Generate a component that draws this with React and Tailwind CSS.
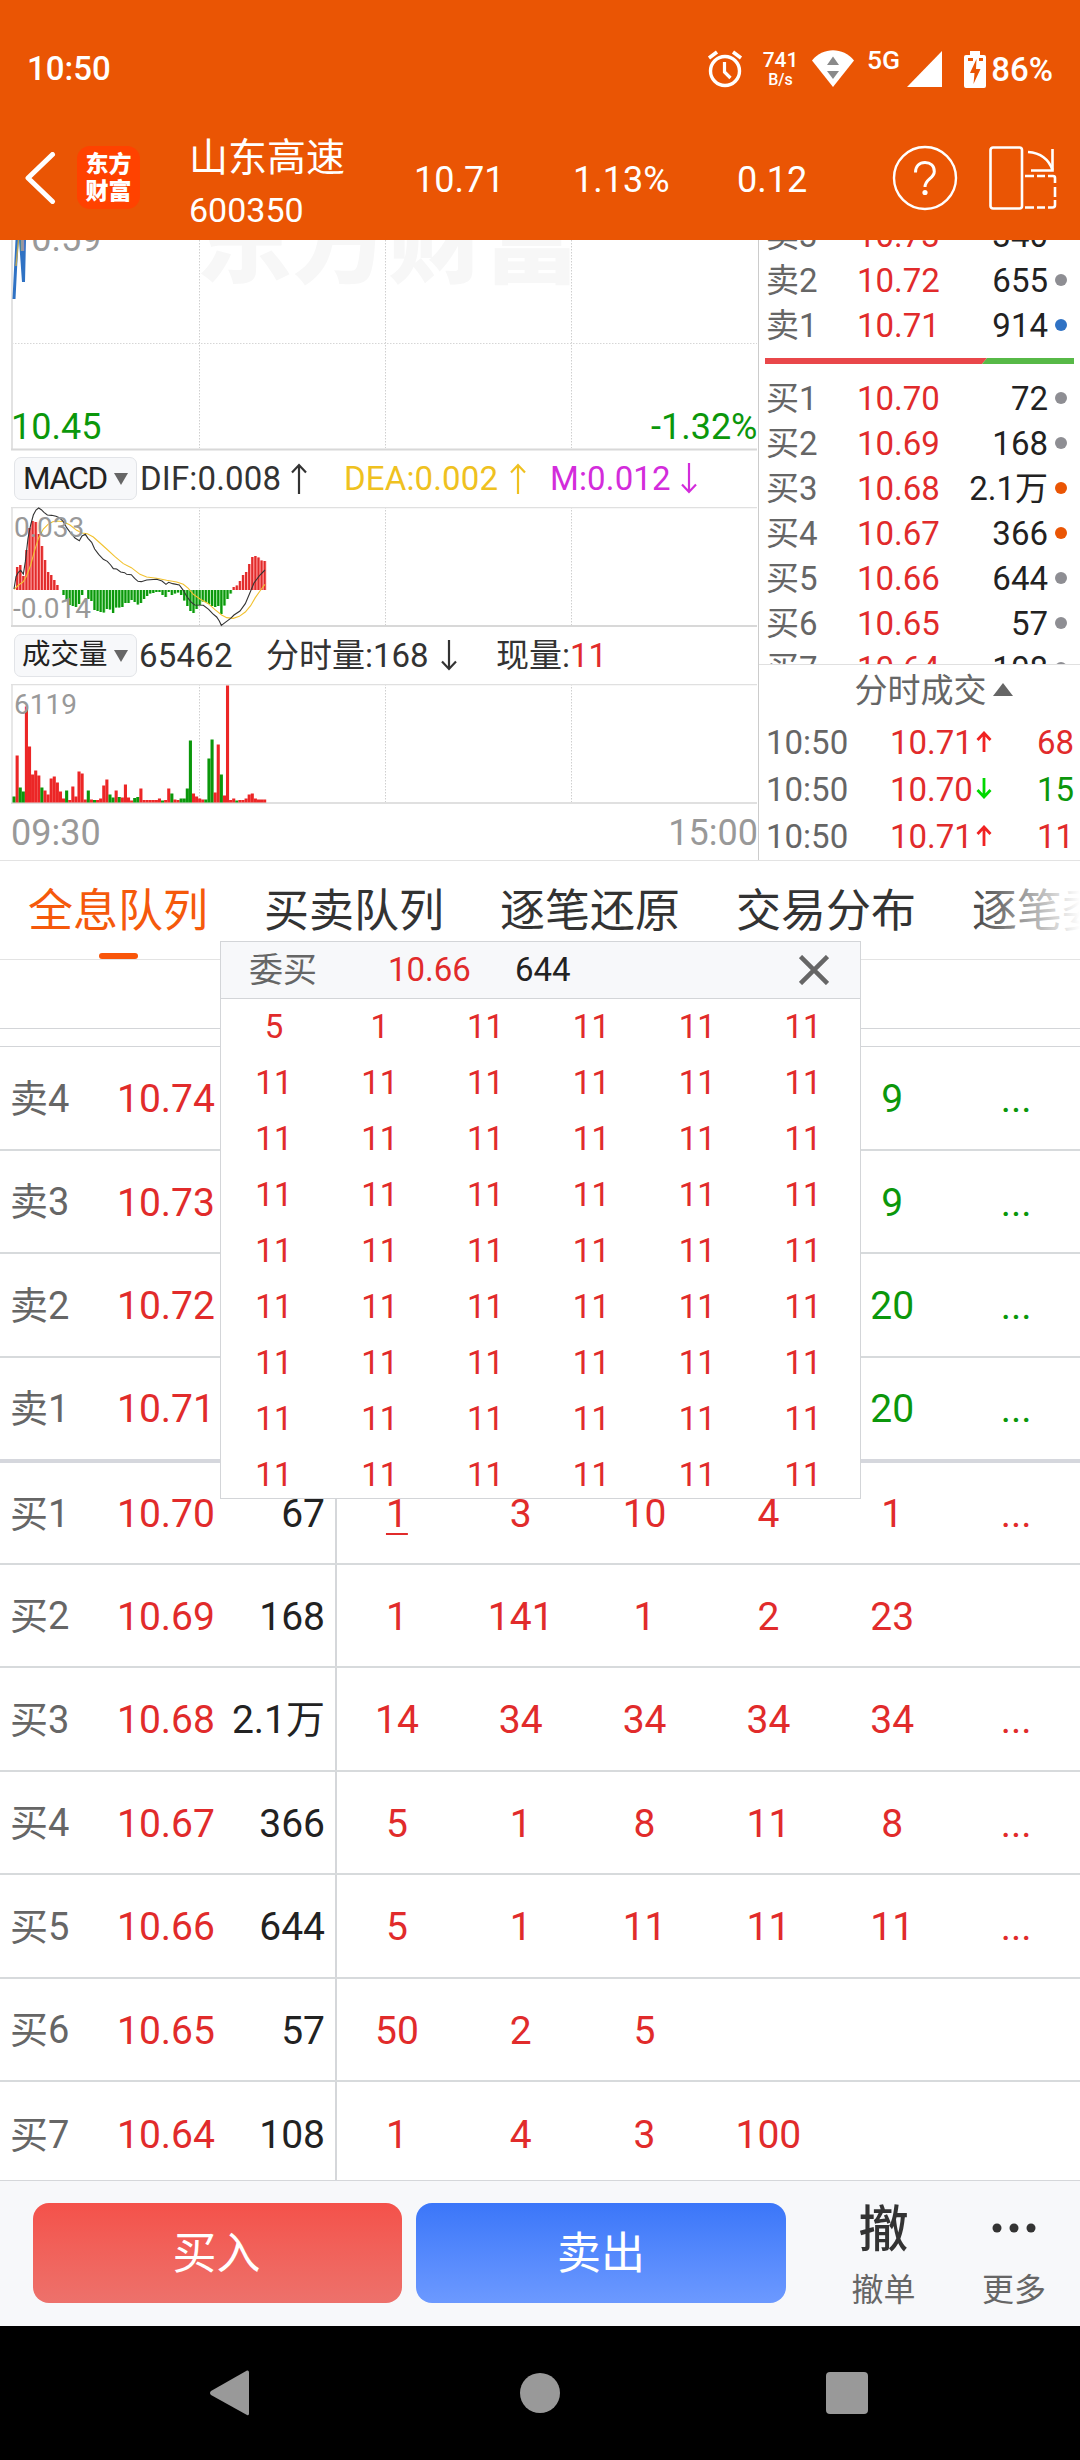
import { useState } from "react";

const RED = "#e12b2b";
const GREEN = "#0b970b";

const asks = [
  { label: "卖3", price: "10.73", qty: "340", dot: "bg-transparent" },
  { label: "卖2", price: "10.72", qty: "655", dot: "bg-[#8e8e93]" },
  { label: "卖1", price: "10.71", qty: "914", dot: "bg-[#2f72c4]" },
];

const bids = [
  { label: "买1", price: "10.70", qty: "72", dot: "bg-[#8e8e93]" },
  { label: "买2", price: "10.69", qty: "168", dot: "bg-[#8e8e93]" },
  { label: "买3", price: "10.68", qty: "2.1万", dot: "bg-[#ea5504]" },
  { label: "买4", price: "10.67", qty: "366", dot: "bg-[#ea5504]" },
  { label: "买5", price: "10.66", qty: "644", dot: "bg-[#8e8e93]" },
  { label: "买6", price: "10.65", qty: "57", dot: "bg-[#8e8e93]" },
  { label: "买7", price: "10.64", qty: "108", dot: "bg-[#8e8e93]" },
];

const trades = [
  { time: "10:50", price: "10.71", up: true, qty: "68" },
  { time: "10:50", price: "10.70", up: false, qty: "15" },
  { time: "10:50", price: "10.71", up: true, qty: "11" },
];

const tabs = ["全息队列", "买卖队列", "逐笔还原", "交易分布", "逐笔委托"];

const queue = [
  { label: "卖4", price: "10.74", qty: "", sell: true, cells: ["", "", "", "", "9", "..."] },
  { label: "卖3", price: "10.73", qty: "", sell: true, cells: ["", "", "", "", "9", "..."] },
  { label: "卖2", price: "10.72", qty: "", sell: true, cells: ["", "", "", "", "20", "..."] },
  { label: "卖1", price: "10.71", qty: "", sell: true, cells: ["", "", "", "", "20", "..."] },
  { label: "买1", price: "10.70", qty: "67", cells: ["1", "3", "10", "4", "1", "..."] },
  { label: "买2", price: "10.69", qty: "168", cells: ["1", "141", "1", "2", "23", ""] },
  { label: "买3", price: "10.68", qty: "2.1万", cells: ["14", "34", "34", "34", "34", "..."] },
  { label: "买4", price: "10.67", qty: "366", cells: ["5", "1", "8", "11", "8", "..."] },
  { label: "买5", price: "10.66", qty: "644", cells: ["5", "1", "11", "11", "11", "..."] },
  { label: "买6", price: "10.65", qty: "57", cells: ["50", "2", "5", "", "", ""] },
  { label: "买7", price: "10.64", qty: "108", cells: ["1", "4", "3", "100", "", ""] },
];

// heights of the rows around the sell / buy divider differ from the rest
const rowStyle = {
  卖1: "h-[105px] border-b-4 border-[#d5d7dd]",
  买1: "h-[102px] border-b-2 border-[#d7dadc]",
  买7: "h-[104px]",
};

const orders = ["5", "1", ...Array(52).fill("11")];

// one value per minute
const macd = [
  0, 23, 25, 14, 40, 62, 69, 68, 56, 44, 30, 18, 15, 10, 5, 0, -5, -11, -15, -16, -17, -14, -5, 0,
  -9, -11, -20, -21, -22, -22.5, -19, -19.5, -23, -17.5, -17.5, -17, -13, -13, -10, -12, -14.5, -13,
  -9, -6, -3.5, -3, -2, -2, -5, -7, -2, -5, -3.5, -2.5, -5, -10.5, -16, -21, -23, -19, -15, -11.5,
  -12, -14, -16, -17, -16, -24, -15.5, -9, -3.5, 3, 4.5, 9, 15, 18, 26, 33, 34, 32.5, 29.5, 29,
];

// negative = down minute
const volume = [
  -6, 47, -15, -11, 96, 56, 28, 32, 27, -15, 12, 8, 24, 26, 20, 11, 4, -12, 2.5, 16, 6, 31, 29, 3,
  -12, 3, -2.5, 2.5, 4, 17, 23, -8, -5, 12, -5.5, 5, 18, 5, 2, -4.5, -5.5, 14, 2.5, 2.5, 2.5, 2.5,
  2.5, 4, -2, 2.5, 14, -9, 3, 2.5, -4, -4, -14, -62, 9, 6, 4, 3, -3, -44, -63, 10, 58, -28, 7, 117,
  2.5, 4, -2, 2.5, 2.5, 4, 8, 9, 4, 3, 3, 3,
];

const DIF =
  "42,252 48,215 55,202 62,196 70,207 76,170 84,100 92,60 100,30 108,15 116,9 124,14 132,22 142,30 155,31 168,34 178,38 190,50 200,68 212,84 225,99 238,107 246,93 256,88 264,100 275,112 284,132 296,148 310,163 322,169 332,180 340,191 350,192 362,201 374,203 380,208 394,209 404,220 414,229 424,230 440,225 470,223 486,228 498,238 506,232 518,236 538,240 550,256 560,274 572,290 584,300 610,301 626,313 638,326 650,336 658,348 664,361 676,352 692,340 702,330 720,318 736,296 748,268 762,234 780,210 795,195";
const DEA =
  "42,253 56,240 70,230 80,212 92,180 104,136 116,98 130,72 144,58 158,50 172,48 190,50 210,60 230,76 246,84 262,86 280,96 300,114 320,132 344,154 370,176 394,188 420,208 440,216 470,220 500,226 530,231 550,238 565,250 580,268 600,282 625,296 645,314 665,330 680,338 700,340 718,334 736,321 752,302 766,278 780,258 795,238";

const GridLines = ({ height }) => (
  <g stroke="#cfcfcf" strokeWidth="1" strokeDasharray="1.5 1.5">
    <path d={`M199.5 0V${height}`} />
    <path d={`M385.5 0V${height}`} />
    <path d={`M571.5 0V${height}`} />
  </g>
);

const Arrow = ({ down, className }) => (
  <svg
    viewBox="0 0 16 31"
    className={className}
    fill="none"
    stroke="currentColor"
    strokeWidth="2.2"
  >
    {down ? <path d="M8 0V29M1 21.500L8 29L15 21.500" /> : <path d="M8 31V2M1 9.500L8 2L15 9.500" />}
  </svg>
);

const StatusBar = () => (
  <div className="flex h-[113px] items-end pr-[27px] pl-[27px] text-white">
    <div className="flex h-[88px] w-full items-center text-[33px] font-medium">
      <span>10:50</span>
      <div className="ml-auto flex h-[38px] items-start">
        <svg width="36" height="38" viewBox="0 0 36 38" fill="none" stroke="white">
          <circle cx="18" cy="21" r="14.500" strokeWidth="3.400" />
          <path d="M17.500 12v10l6 6" strokeWidth="3.200" />
          <path d="M2 8L10 2M34 8L26 2" strokeWidth="3.600" />
        </svg>
        <div className="ml-[19px] flex w-[37px] flex-col items-center">
          <span className="text-[21px] leading-[20px]">741</span>
          <span className="text-[16px] leading-[20px]">B/s</span>
        </div>
        <svg className="ml-[13px]" width="42" height="37" viewBox="0 0 42 37">
          <path d="M0 10.500C11-3.200 31-3.200 42 10.500L21 37Z" fill="white" />
          <path d="M21 6.500L27 15H15ZM21 29L15 21H27Z" fill="#8a8a8a" />
        </svg>
        <span className="ml-[13px] text-[26.5px] leading-[20px] font-medium">5G</span>
        <svg className="mt-[1px] ml-[7px]" width="35" height="36" viewBox="0 0 35 36">
          <path d="M35 0V36H0Z" fill="white" />
        </svg>
        <svg className="mt-[1px] ml-[22px]" width="22" height="37" viewBox="0 0 22 37">
          <path d="M6 0h10v4h4a2 2 0 0 1 2 2v29a2 2 0 0 1-2 2H2a2 2 0 0 1-2-2V6a2 2 0 0 1 2-2h4Z" fill="white" />
          <path d="M12.500 8L6 22h4.500L9.500 33L16.500 18H12ZM4 7h5v3H4ZM15 7h4v3h-4Z" fill="#ea5504" />
        </svg>
        <span className="ml-[5px] leading-[40px]">86%</span>
      </div>
    </div>
  </div>
);

const Header = () => (
  <div className="flex h-[127px] items-start text-white">
    <svg className="mt-[39px] ml-[24px]" width="32" height="52" viewBox="0 0 32 52" fill="none" stroke="white" strokeWidth="5">
      <path d="M28.500 2.500L4 26L28.500 49.500" strokeLinecap="round" strokeLinejoin="round" />
    </svg>
    <div className="mt-[33px] ml-[21px] flex h-[63px] w-[63px] flex-col items-center justify-center rounded-[13px] bg-[#ff4200] text-[23px] leading-[27px] font-black">
      <span>东方</span>
      <span>财富</span>
    </div>
    <div className="mt-[20px] ml-[49px] flex w-[225px] flex-col">
      <span className="text-[39px] leading-[50px]">山东高速</span>
      <span className="text-[34px] leading-[55px]">600350</span>
    </div>
    <div className="flex h-[134px] items-center text-[36px]">
      <span className="w-[159px]">10.71</span>
      <span className="w-[164px]">1.13%</span>
      <span className="w-[155px]">0.12</span>
    </div>
    <svg className="mt-[32px]" width="66" height="66" viewBox="0 0 66 66" fill="none" stroke="white">
      <circle cx="33" cy="33" r="31" strokeWidth="2.400" />
      <path d="M23.500 27.500C23.500 21 27.500 17.500 33 17.500S42.300 21 42.300 26.500C42.300 33.500 33 34 33 42" strokeWidth="3" />
      <circle cx="33" cy="47.500" r="2.600" fill="white" stroke="none" />
    </svg>
    <svg className="mt-[32px] ml-[30px]" width="70" height="66" viewBox="0 0 70 66" fill="none" stroke="white" strokeWidth="2.600">
      <rect x="2.500" y="2.500" width="31.500" height="61" rx="2.500" />
      <path d="M40 7C53 8 61 15 64.500 25" />
      <path d="M64.500 4V25.500H43" />
      <path d="M37 31H46M49 31H57M60 31H65Q67 31 67 33V38M67 42V52M67 55V60Q67 62.500 64.500 62.500H60M57 62.500H49M46 62.500H37" />
    </svg>
  </div>
);

const Chip = ({ children }) => (
  <div className="ml-[14px] flex h-[43px] w-[123px] shrink-0 items-center justify-between rounded-[7px] border border-[#e2e4e8] bg-[#f7f8fa] pr-[8px] pl-[8px] text-[#222]">
    {children}
    <svg width="14" height="12" viewBox="0 0 14 12">
      <path d="M0 0H14L7 12Z" fill="#666" />
    </svg>
  </div>
);

const Charts = () => (
  <div className="flex w-[758px] flex-col">
    <svg width="758" height="211" viewBox="0 0 758 211" className="block">
      <text x="196" y="35" fontSize="96" fontWeight="900" fill="#f7f7f7">东方财富</text>
      <GridLines height={208} />
      <path d="M12 103.500H757" stroke="#d6d6d6" strokeDasharray="1.5 1.5" />
      <path d="M12 0V210" stroke="#e2e2e2" strokeWidth="2" />
      <path d="M11 209.500H757" stroke="#d8d8d8" strokeWidth="2" />
      <path d="M14 59L17 0M20.500 0L23.500 42L24.500 0" stroke="#2f72c4" strokeWidth="3" fill="none" />
      <path d="M16 26L18.500 0" stroke="#b9a55a" strokeWidth="1.500" />
      <text x="11" y="11" fontSize="36" fill="#999">10.59</text>
      <text x="11" y="199" fontSize="36" fill={GREEN}>10.45</text>
      <text x="757.5" y="199" fontSize="36" fill={GREEN} textAnchor="end">-1.32%</text>
    </svg>

    <div className="flex h-[56px] items-center pb-[1px] text-[33px] text-[#333]">
      <Chip>
        <span className="text-[31.5px] tracking-[-1.4px]">MACD</span>
      </Chip>
      <span className="ml-[3px] w-[151px] tracking-[0.15px] whitespace-nowrap">DIF:0.008</span>
      <Arrow className="h-[31px] w-[16px]" />
      <div className="flex items-center text-[#efc120]">
        <span className="ml-[37px] w-[166px] tracking-[0.15px] whitespace-nowrap">DEA:0.002</span>
        <Arrow className="h-[31px] w-[16px]" />
      </div>
      <div className="flex items-center text-[#d32cdb]">
        <span className="ml-[24px] w-[131px] tracking-[0.15px] whitespace-nowrap">M:0.012</span>
        <Arrow down className="h-[31px] w-[16px]" />
      </div>
    </div>

    <svg width="758" height="120" viewBox="0 0 758 120" className="block">
      <GridLines height={118} />
      <path d="M12 0V119M11 0.500H757" stroke="#e0e0e0" strokeWidth="1.500" />
      <path d="M11 119H757" stroke="#d8d8d8" strokeWidth="2" />
      {macd.map((v, i) => (
        <g key={i}>
          <rect x={12.800 + i * 3.094} y={v > 0 ? 83 - v : 83} width="2.900" height={Math.abs(v)} fill={v > 0 ? "#ff9a9a" : "#8fe08f"} />
          <rect x={13 + i * 3.094} y={v > 0 ? 83 - v : 83} width="2" height={Math.abs(v)} fill={v > 0 ? RED : GREEN} />
        </g>
      ))}
      <g transform="scale(0.3333) translate(0 -6)" fill="none" strokeWidth="3.300">
        <polyline points={DEA} stroke="#f2c230" />
        <polyline points={DIF} stroke="#333" />
      </g>
      <text x="14" y="30" fontSize="28" fill="#999">0.033</text>
      <text x="13" y="111" fontSize="28" fill="#999">-0.014</text>
    </svg>

    <div className="flex h-[57px] items-center text-[33px] text-[#333]">
      <Chip>
        <span className="-ml-[1px] text-[28.5px]">成交量</span>
      </Chip>
      <span className="ml-[2px] w-[127px] tracking-[0.2px]">65462</span>
      <span className="w-[175px] whitespace-nowrap">分时量:168</span>
      <Arrow down className="h-[31px] w-[16px]" />
      <span className="ml-[39px] whitespace-nowrap">
        现量:<span className="text-[#e12b2b]">11</span>
      </span>
    </div>

    <svg width="758" height="120" viewBox="0 0 758 120" className="block">
      <GridLines height={118} />
      <path d="M12 0V119M11 0.500H757" stroke="#e0e0e0" strokeWidth="1.500" />
      <path d="M11 119H757" stroke="#e0e0e0" strokeWidth="2" />
      {volume.map((v, i) => (
        <rect key={i} x={12.500 + i * 3.094} y={118.500 - Math.abs(v)} width="3.100" height={Math.abs(v)} fill={v > 0 ? "#ec2626" : GREEN} />
      ))}
      <text x="14" y="30" fontSize="28" fill="#999">6119</text>
    </svg>

    <div className="flex h-[56px] items-center justify-between pt-[2px] pl-[11px] text-[36px] text-[#999]">
      <span>09:30</span>
      <span>15:00</span>
    </div>
  </div>
);

const BookRow = ({ row }) => (
  <div className="flex h-[45px] shrink-0 items-center pr-[13px] text-[33px] leading-[45px]">
    <span className="w-[91px] text-[#666]">{row.label}</span>
    <span className="text-[#e12b2b]">{row.price}</span>
    <span className="ml-auto text-[#222]">{row.qty}</span>
    <span className={`mb-[2px] ml-[7px] h-[12px] w-[12px] rounded-full ${row.dot}`} />
  </div>
);

const OrderBook = () => (
  <div className="flex w-[322px] flex-col border-l border-[#ccc]">
    <div className="flex h-[426px] flex-col overflow-hidden border-b border-[#e0e0e0] pl-[7px]">
      <div className="-mt-[27px] flex flex-col">
        {asks.map((row) => (
          <BookRow key={row.label} row={row} />
        ))}
      </div>
      <svg className="mt-[10px] mb-[12px] -ml-[1px] shrink-0" width="309" height="6" viewBox="0 0 309 6">
        <path d="M0 0H222L217 6H0Z" fill="#e9474a" />
        <path d="M222 0H309V6H217Z" fill="#57b947" />
      </svg>
      {bids.map((row) => (
        <BookRow key={row.label} row={row} />
      ))}
    </div>
    <div className="flex h-[54px] items-center justify-center pb-[2px] pl-[28px] text-[33px] text-[#666]">
      分时成交
      <svg className="mb-[3px] ml-[6px]" width="20" height="13" viewBox="0 0 20 13">
        <path d="M10 0L20 13H0Z" fill="#666" />
      </svg>
    </div>
    {trades.map((t, i) => (
      <div key={i} className="flex h-[47px] items-center pr-[6px] pl-[7px] text-[33px]">
        <span className="w-[124px] text-[#666]">{t.time}</span>
        <span className="w-[86px] text-[#e12b2b]">{t.price}</span>
        <svg
          className={t.up ? "mb-[2px] text-[#f02222]" : "mb-[2px] rotate-180 text-[#00d800]"}
          width="16"
          height="21"
          viewBox="0 0 16 21"
          fill="none"
          stroke="currentColor"
          strokeWidth="2.800"
        >
          <path d="M8 21V2M1.500 9L8 2L14.500 9" />
        </svg>
        <span className={t.up ? "ml-auto text-[#e12b2b]" : "ml-auto text-[#0b970b]"}>{t.qty}</span>
      </div>
    ))}
  </div>
);

const Tabs = ({ active, onSelect }) => (
  <div className="relative flex h-[99px] shrink-0 gap-[56px] overflow-hidden border-b border-[#e3e3e3] pl-[28px]">
    {tabs.map((tab, i) => (
      <button
        key={tab}
        onClick={() => onSelect(i)}
        className="relative flex w-[180px] shrink-0 justify-center text-[45px] leading-[101px] whitespace-nowrap"
      >
        <span className={i === active ? "text-[#f5590b]" : "text-[#333]"}>{tab}</span>
        {i === active && (
          <span className="absolute bottom-0 left-[71px] h-[6px] w-[39px] rounded-full bg-[#f9560a]" />
        )}
      </button>
    ))}
    <div className="absolute top-0 right-0 h-[97px] w-[105px] bg-linear-to-r from-white/10 to-white" />
  </div>
);

const QueueRow = ({ row }) => (
  <div
    className={`flex shrink-0 text-[39px] ${rowStyle[row.label] || "h-[103.5px] border-b-2 border-[#d7dadc]"}`}
  >
    <div className="flex w-[337px] items-center border-r-2 border-[#d5d7da] pt-[3px] pr-[10px] pl-[10px]">
      <span className="w-[107px] text-[38px] text-[#666]">{row.label}</span>
      <span className="text-[#e12b2b]">{row.price}</span>
      <span className="ml-auto text-[#222]">{row.qty}</span>
    </div>
    <div
      className={`-ml-[2px] grid w-[743px] grid-cols-6 items-center pt-[3px] text-center ${
        row.sell ? "text-[#0b970b]" : "text-[#e12b2b]"
      }`}
    >
      {row.cells.map((c, i) => (
        <span
          key={i}
          className={row.label === "买1" && i === 0 ? "underline decoration-2 underline-offset-[6px]" : ""}
        >
          {c}
        </span>
      ))}
    </div>
  </div>
);

const OrdersPopup = ({ onClose }) => (
  <div className="absolute top-[941px] left-[220px] flex h-[558px] w-[641px] flex-col overflow-hidden border border-[#d3d5d8] bg-white">
    <div className="flex h-[57px] shrink-0 items-center border-b border-[#d3d5d8] bg-[#f7f8fa] pr-[31px] pl-[28px] text-[33px]">
      <span className="w-[139px] text-[34px] text-[#666]">委买</span>
      <span className="w-[127px] text-[#e12b2b]">10.66</span>
      <span className="text-[#222]">644</span>
      <button className="ml-auto" onClick={onClose}>
        <svg width="30" height="30" viewBox="0 0 30 30" stroke="#666" strokeWidth="4.500">
          <path d="M1.500 1.500L28.500 28.500M28.500 1.500L1.500 28.500" />
        </svg>
      </button>
    </div>
    <div className="grid w-[635px] shrink-0 grid-cols-6 text-center text-[33px] leading-[56px] text-[#e12b2b]">
      {orders.map((n, i) => (
        <span key={i} className="h-[56px]">{n}</span>
      ))}
    </div>
  </div>
);

const ActionBar = () => (
  <div className="flex h-[146px] shrink-0 items-start border-t border-[#d5d7da] bg-[#f7f8fa] pl-[33px]">
    <button className="mt-[22px] h-[100px] w-[369px] rounded-[16px] bg-linear-to-b from-[#f4514a] to-[#ed716b] pt-[2px] pr-[2px] text-[44px] text-white">
      买入
    </button>
    <button className="mt-[22px] ml-[14px] h-[100px] w-[370px] rounded-[16px] bg-linear-to-b from-[#3b76f9] to-[#6c99ff] pt-[2px] text-[44px] text-white">
      卖出
    </button>
    <div className="ml-[32px] flex w-[131px] flex-col items-center text-[#666]">
      <span className="mt-[17px] text-[50px] leading-[64px] font-medium text-[#333]">撤</span>
      <span className="mt-[8px] text-[32px] leading-[40px]">撤单</span>
    </div>
    <div className="flex w-[130px] flex-col items-center text-[#666]">
      <svg className="mt-[42px] mb-[42px]" width="44" height="10" viewBox="0 0 44 10" fill="#333">
        <circle cx="5" cy="5" r="4.500" />
        <circle cx="22" cy="5" r="4.500" />
        <circle cx="39" cy="5" r="4.500" />
      </svg>
      <span className="-mt-[5px] text-[32px] leading-[40px]">更多</span>
    </div>
  </div>
);

const NavBar = () => (
  <div className="flex h-[134px] shrink-0 items-center bg-black">
    <svg width="1080" height="50" viewBox="0 0 1080 50" fill="#999">
      <path d="M247 2.500Q249 2 249 4.500V45.500Q249 48 247 47L211 27Q209 25 211 23Z" />
      <circle cx="540" cy="25" r="20" />
      <rect x="826" y="4" width="42" height="42" rx="4" />
    </svg>
  </div>
);

export default function App() {
  const [active, setActive] = useState(0);
  const [open, setOpen] = useState(true);

  return (
    <div className="relative flex h-[2460px] w-[1080px] flex-col overflow-hidden bg-white font-['Roboto','Noto_Sans_CJK_SC',sans-serif]">
      {/* Orange top */}
      <div className="bg-[#ea5504]">
        <StatusBar />
        <Header />
      </div>

      {/* Charts + order book */}
      <div className="flex h-[621px] shrink-0 border-b border-[#e3e3e3]">
        <Charts />
        <OrderBook />
      </div>

      <Tabs active={active} onSelect={setActive} />

      {/* Queue table */}
      <div className="h-[69px] shrink-0 border-b border-[#d3d5d8]" />
      <div className="h-[18px] shrink-0 border-b border-[#d3d5d8]" />
      <div className="flex h-[1133px] shrink-0 flex-col overflow-hidden">
        {queue.map((row) => (
          <QueueRow key={row.label} row={row} />
        ))}
      </div>

      <ActionBar />
      <NavBar />

      {open && <OrdersPopup onClose={() => setOpen(false)} />}
    </div>
  );
}
